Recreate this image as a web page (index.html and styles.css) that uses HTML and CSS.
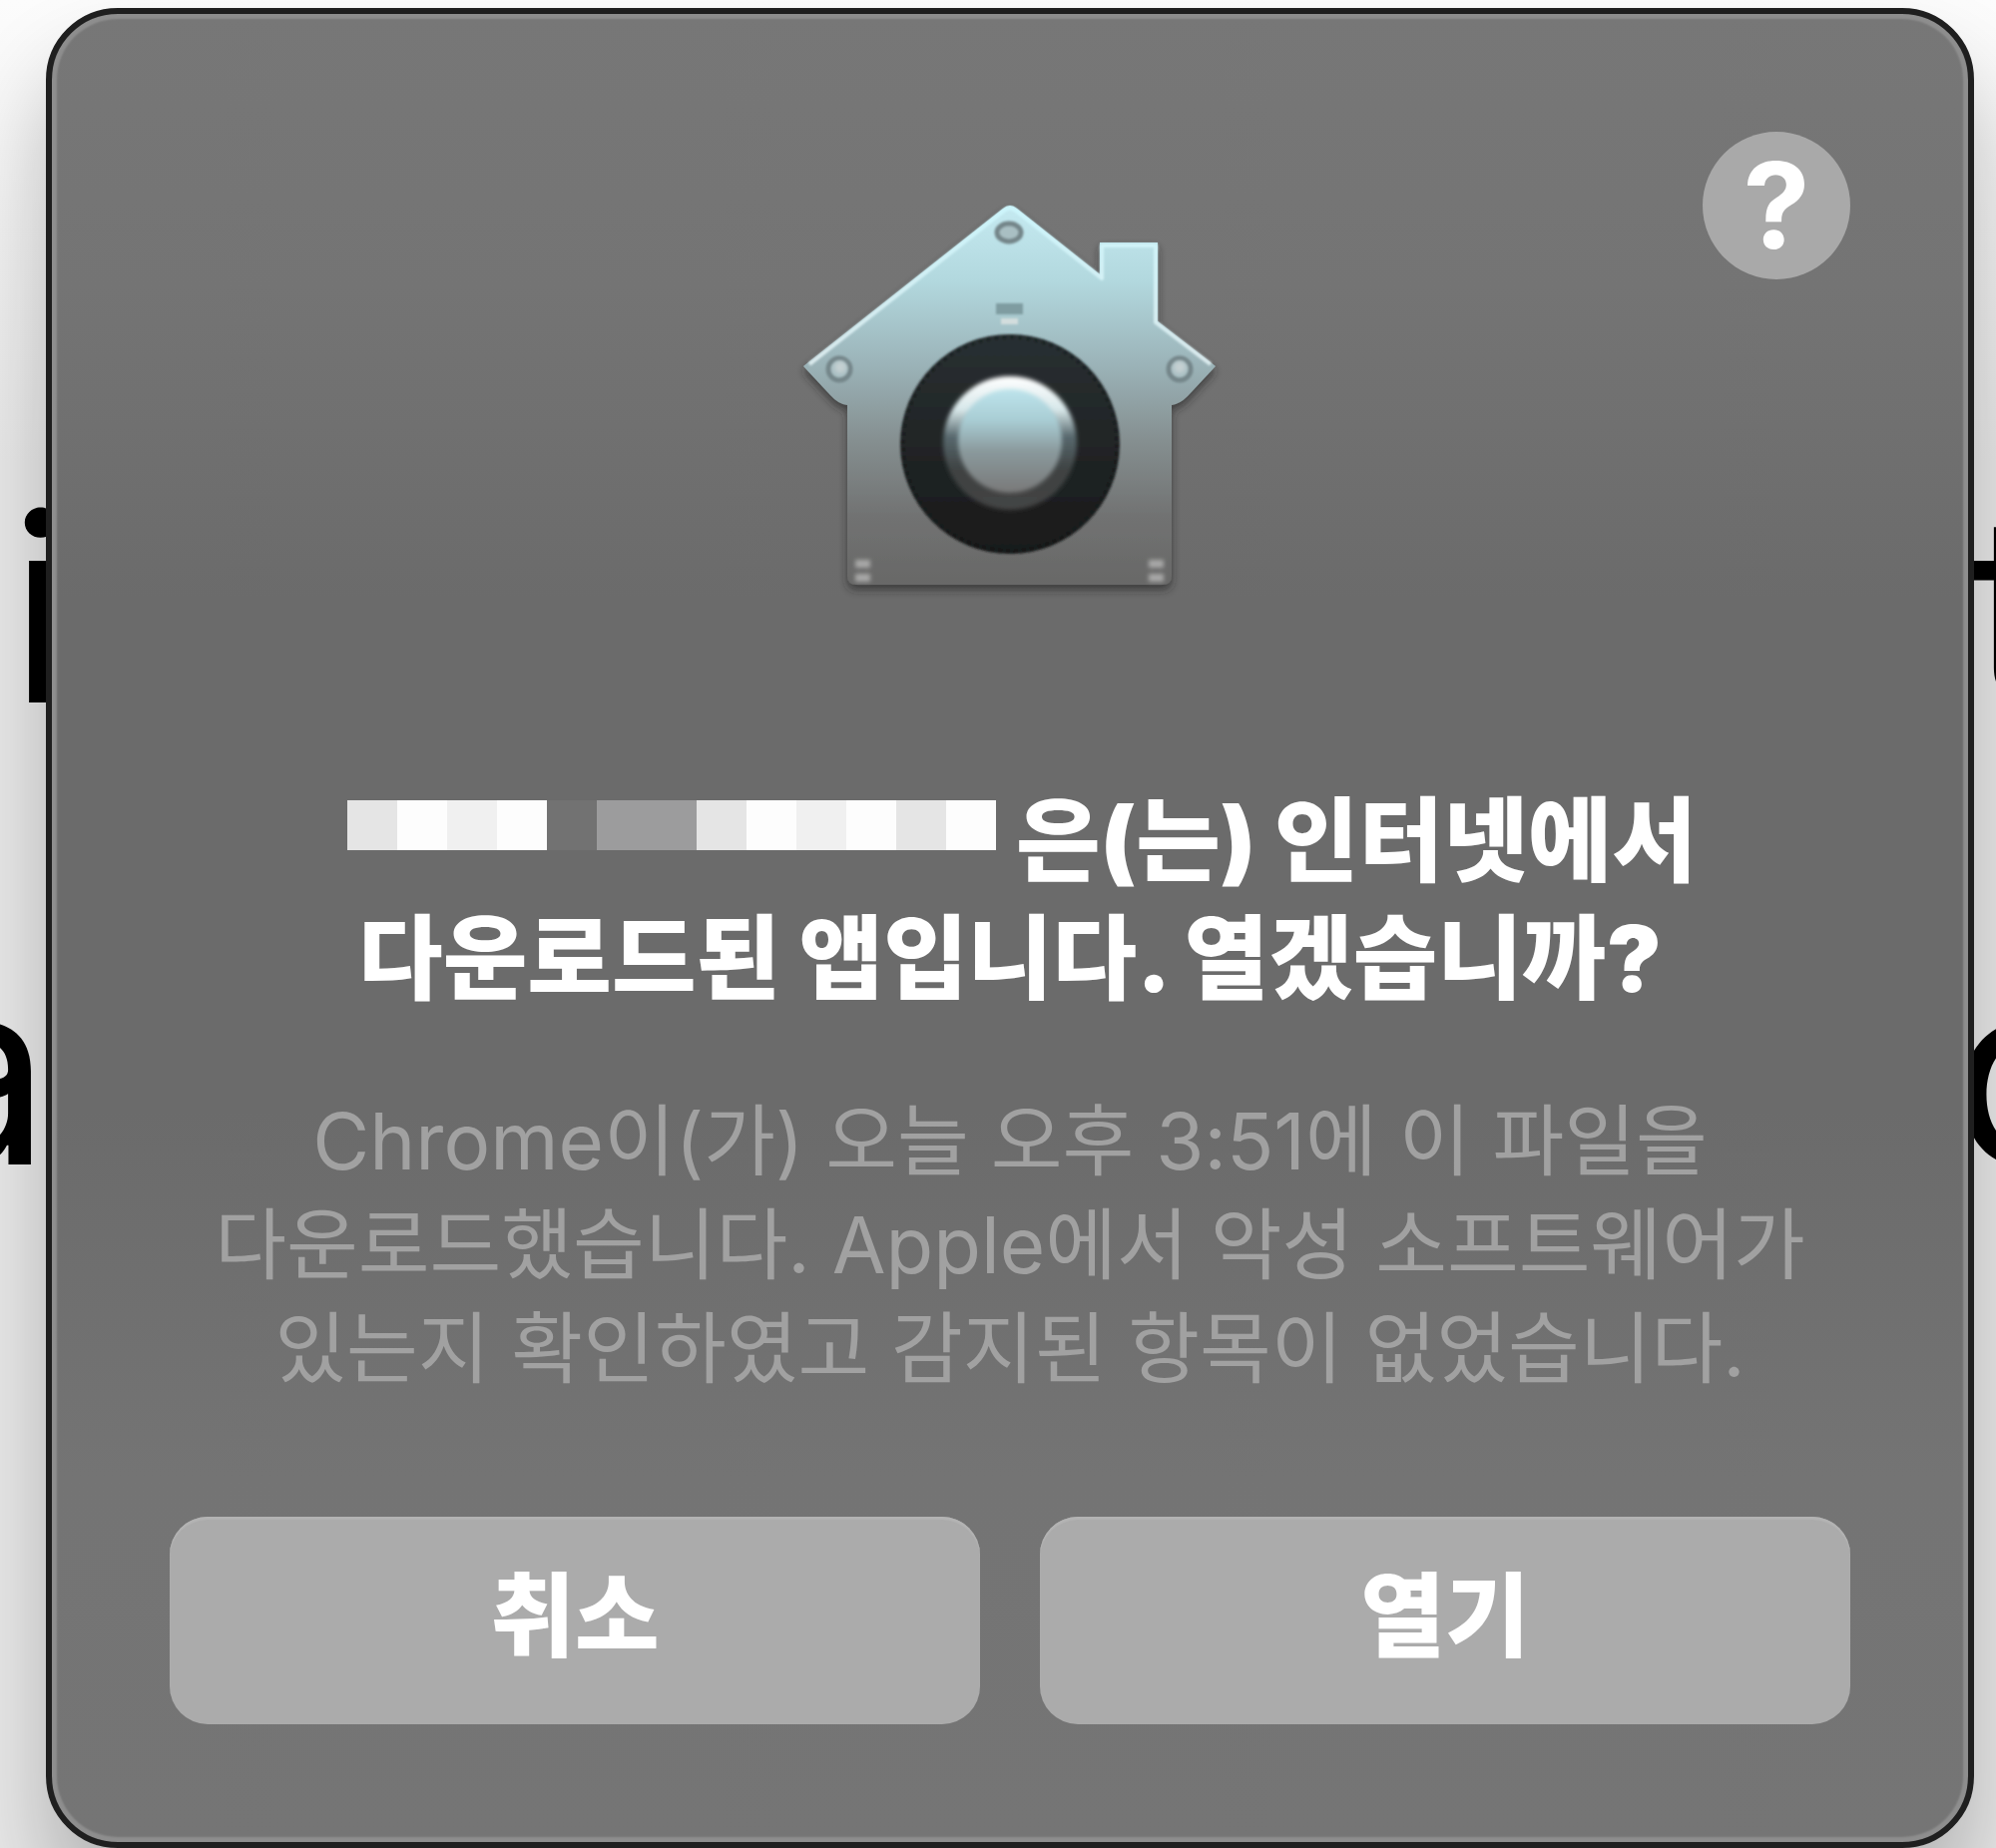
FILE: index.html
```html
<!DOCTYPE html>
<html lang="ko">
  <head>
    <meta charset="utf-8">
    <meta name="viewport" content="width=device-width, initial-scale=1">
    <title>열기 확인</title>
    <link rel="stylesheet" href="styles.css">
  </head>
  <body>

    <!-- page behind the dialog -->
    <div class="backdrop">
      <div class="backdrop-line"><span class="backdrop-start">i</span><span class="backdrop-end backdrop-edge">t</span></div>
      <div class="backdrop-line"><span class="backdrop-start backdrop-cut">a</span><span class="backdrop-end">o</span></div>
    </div>

    <main class="dialog">
      <header class="dialog-header">
        <svg class="app-icon" viewBox="2 0 460 440">
          <defs>
            <linearGradient id="wall" x1="0" y1="0" x2="0" y2="1">
              <stop offset="0" stop-color="#c5eaf1"/>
              <stop offset=".2" stop-color="#b2d8de"/>
              <stop offset=".42" stop-color="#9bb3b8"/>
              <stop offset=".62" stop-color="#858f90"/>
              <stop offset=".82" stop-color="#717272"/>
              <stop offset="1" stop-color="#686867"/>
            </linearGradient>
            <linearGradient id="edge" x1="0" y1="0" x2="0" y2="1">
              <stop offset="0" stop-color="#cdf6fc"/>
              <stop offset="1" stop-color="#dcebee"/>
            </linearGradient>
            <linearGradient id="ring" x1="0" y1="0" x2="0" y2="1">
              <stop offset="0" stop-color="#293032"/>
              <stop offset="1" stop-color="#191a1a"/>
            </linearGradient>
            <linearGradient id="rim" x1="0" y1="0" x2="0" y2="1">
              <stop offset="0" stop-color="#fff"/>
              <stop offset=".25" stop-color="#d8e8ea"/>
              <stop offset=".45" stop-color="#58696e"/>
              <stop offset=".7" stop-color="#3f4343"/>
              <stop offset="1" stop-color="#444"/>
            </linearGradient>
            <linearGradient id="knob" x1="0" y1="0" x2="0" y2="1">
              <stop offset="0" stop-color="#bde4ec"/>
              <stop offset=".3" stop-color="#a9cdd4"/>
              <stop offset=".6" stop-color="#8a999c"/>
              <stop offset="1" stop-color="#797979"/>
            </linearGradient>
            <filter id="drop" x="-10%" y="-10%" width="120%" height="120%">
              <feDropShadow dx="0" dy="5" stdDeviation="4" flood-color="#222" flood-opacity=".65"/>
            </filter>
            <filter id="soft" x="-20%" y="-20%" width="140%" height="140%">
              <feGaussianBlur stdDeviation="2"/>
            </filter>
            <filter id="fine" x="-20%" y="-20%" width="140%" height="140%">
              <feGaussianBlur stdDeviation="1"/>
            </filter>
          </defs>
          <path filter="url(#drop)" fill="url(#wall)" d="M225 29Q232 23 239 29L322 95V63H380V142L438 187L410 217Q402 225 394 226V397Q394 406 385 406H78Q69 406 69 397V226Q60 225 52 216L25 187Z"/>
          <path filter="url(#fine)" fill="none" stroke="url(#edge)" stroke-width="4" stroke-linejoin="round" d="M31 185L226 31Q232 26 238 31L324 99V66H378V143L433 185"/>
          <g fill="#a9bfc3" stroke="#75868a" stroke-width="5" filter="url(#fine)">
            <ellipse cx="231" cy="53" rx="12" ry="9"/>
            <circle cx="61" cy="190" r="11"/>
            <circle cx="402" cy="190" r="11"/>
          </g>
          <g fill="#c5d0d2" filter="url(#soft)">
            <circle cx="62" cy="188" r="6"/>
            <circle cx="402" cy="188" r="6"/>
          </g>
          <rect x="218" y="124" width="27" height="11" fill="#7f9ca1" filter="url(#fine)"/>
          <rect x="223" y="139" width="17" height="6" fill="#d3dddd" filter="url(#fine)"/>
          <g filter="url(#fine)">
            <circle cx="232" cy="265" r="110" fill="url(#ring)"/>
            <circle cx="232" cy="265" r="107" fill="none" stroke="#111717" stroke-opacity=".4" stroke-width="4" stroke-dasharray="4 4"/>
          </g>
          <circle cx="232" cy="264" r="67" fill="url(#rim)" filter="url(#soft)"/>
          <circle cx="232" cy="262" r="52" fill="url(#knob)" filter="url(#soft)"/>
          <g fill="#a8a8a7" filter="url(#soft)">
            <rect x="77" y="381" width="15" height="8"/>
            <rect x="77" y="395" width="15" height="8"/>
            <rect x="371" y="381" width="15" height="8"/>
            <rect x="371" y="395" width="15" height="8"/>
          </g>
        </svg>
        <button class="help" type="button">?</button>
      </header>

      <h1 class="dialog-title">
        <span class="redacted">
          <i class="tone-3"></i><i class="tone-1"></i><i class="tone-2"></i><i class="tone-1"></i><i class="tone-5"></i><i class="tone-4"></i><i class="tone-4"></i><i class="tone-3"></i><i class="tone-1"></i><i class="tone-2"></i><i class="tone-1"></i><i class="tone-3"></i><i class="tone-1"></i>
        </span>은(는) 인터넷에서<br>다운로드된 앱입니다. 열겠습니까?
      </h1>

      <p class="dialog-text">Chrome이(가) 오늘 오후 3:51에 이 파일을<br>다운로드했습니다. Apple에서 악성 소프트웨어가<br>있는지 확인하였고 감지된 항목이 없었습니다.</p>

      <div class="dialog-buttons">
        <button class="btn" type="button">취소</button>
        <button class="btn" type="button">열기</button>
      </div>
    </main>

  </body>
</html>
```
FILE: styles.css
```css
* {
    box-sizing: border-box;
}
body {
    margin: 0;
    min-height: 100vh;
    position: relative;
    display: grid;
    padding: 8px 22px 0 46px;
    overflow: hidden;
    font-family: Inter, "Noto Sans CJK KR", sans-serif;
    background: linear-gradient(#fcfcfc, #e9e9e9 25%, #e9e9e9);
}

/* page behind the dialog */
.backdrop {
    position: absolute;
    inset: 0;
    padding-top: 378px;
    overflow: hidden;
    font-size: 260px;
    font-weight: 400;
    line-height: 463px;
    color: #000;
}
.backdrop-line {
    display: flex;
    justify-content: space-between;
}
.backdrop-start {
    display: flex;
    justify-content: flex-end;
    width: 72px;
}
.backdrop-cut {
    width: 51px;
}
.backdrop-end {
    width: 46px;
}
.backdrop-edge {
    width: 26px;
}

/* dialog */
.dialog {
    position: relative;
    display: flex;
    flex-direction: column;
    padding: 118px;
    border: 6px solid #1f1f1f;
    border-radius: 72px;
    color: #fff;
    background: linear-gradient(#777, #747474 15%, #6b6b6b 32%, #6b6b6b 60%, #747474 80%, #757575);
    box-shadow: inset 0 0 2px 5px #8e8e8e, 0 60px 90px rgb(0 0 0 / 24%);
}
.dialog-header {
    display: grid;
    grid-template-columns: 1fr auto 1fr;
}
.app-icon {
    grid-column: 2;
    width: 460px;
    height: 440px;
    margin-top: 48px;
}
.help {
    justify-self: end;
    width: 148px;
    height: 148px;
    padding: 0;
    border: 0;
    border-radius: 50%;
    font-family: inherit;
    font-size: 120px;
    font-weight: 700;
    line-height: 148px;
    color: #fff;
    background: #a9a9a9;
}
.dialog-title {
    margin: 164px 0 0;
    font-size: 92px;
    font-weight: 900;
    line-height: 118px;
    text-align: center;
    white-space: nowrap;
}
.redacted {
    display: inline-flex;
    margin: 0 20px 0 24px;
    vertical-align: 24px;
}
.redacted i {
    width: 50px;
    height: 50px;
}
.tone-1 {
    background: #fdfdfd;
}
.tone-2 {
    background: #f0f0f0;
}
.tone-3 {
    background: #e5e5e5;
}
.tone-4 {
    background: #9c9c9d;
}
.tone-5 {
    background: #727272;
}
.dialog-text {
    margin: 72px 0 0;
    font-size: 78px;
    line-height: 104px;
    text-align: center;
    white-space: nowrap;
    color: #a1a1a1;
}
.dialog-buttons {
    display: grid;
    grid-template-columns: 1fr 1fr;
    gap: 60px;
    margin-top: 116px;
}
.btn {
    height: 208px;
    padding: 0 0 24px;
    border: 0;
    border-radius: 38px;
    font-family: inherit;
    font-size: 92px;
    font-weight: 900;
    color: #fff;
    background: #ababab;
    box-shadow: inset 0 3px 1px #b3b3b3;
}
```
